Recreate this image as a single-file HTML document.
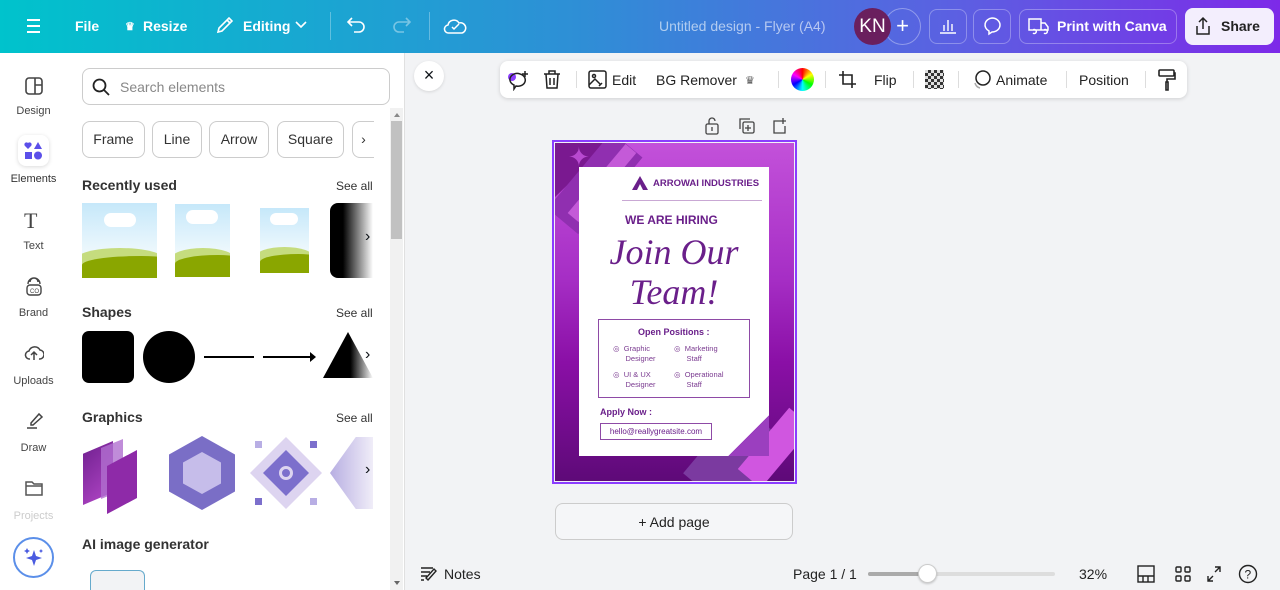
<!DOCTYPE html>
<html><head><meta charset="utf-8"><style>
*{box-sizing:border-box;margin:0;padding:0}
html,body{width:1280px;height:590px;overflow:hidden}
body{font-family:"Liberation Sans",sans-serif;background:#f2f3f5;position:relative;color:#0e1318}
.a{position:absolute}
.top{left:0;top:0;width:1280px;height:53px;background:linear-gradient(90deg,#00c3cc 0%,#2e8fd6 45%,#5c5fe2 75%,#7d2ae8 100%);color:#fff;font-weight:bold;font-size:14px}
.top .t{position:absolute;top:18px}
.btnb{position:absolute;top:9px;height:35px;border:1px solid rgba(255,255,255,.3);border-radius:8px}
.rail{left:0;top:53px;width:67px;height:537px;background:#fff}
.rail .l{position:absolute;width:67px;text-align:center;font-size:11px;color:#444}
.panel{left:67px;top:53px;width:338px;height:537px;background:#fff;border-right:1px solid #e0e0e0}
.chip{position:absolute;height:37px;border:1px solid #ccc;border-radius:8px;font-size:14px;color:#333;text-align:center;line-height:35px}
.h{position:absolute;font-size:14px;font-weight:bold;color:#333}
.sa{position:absolute;font-size:12px;color:#333}
.tb{left:500px;top:61px;width:687px;height:37px;background:#fff;border-radius:8px;box-shadow:0 1px 4px rgba(0,0,0,.15);font-size:14px;color:#222}
.tb span{position:absolute;top:11px}
.sep{position:absolute;top:10px;width:1px;height:17px;background:#ddd}
.land{position:absolute;overflow:hidden;background:linear-gradient(#c6e8fa,#f0f9fd 70%)}
.land .c{position:absolute;background:#fff;border-radius:10px}
.land .g1{position:absolute;left:-10%;width:120%;height:40%;bottom:0;background:#c5dc7e;border-radius:50% 50% 0 0/40% 40% 0 0}
.land .g2{position:absolute;left:0;width:130%;height:30%;bottom:0;background:#8aa600;border-radius:60% 40% 0 0/40% 30% 0 0}
</style></head><body>
<div class="a top">
 <div class="a" style="left:27px;top:19px;width:13px;height:2px;background:#fff;box-shadow:0 6px #fff,0 12px #fff"></div>
 <span class="t" style="left:75px">File</span>
 <span class="t" style="left:125px;font-size:11px;top:20px">♛</span><span class="t" style="left:143px">Resize</span>
 <svg class="a" style="left:215px;top:15px" width="20" height="20" viewBox="0 0 20 20" fill="none" stroke="#fff" stroke-width="1.6"><path d="M3 17l1-4L14 3l3 3L7 16z M12 5l3 3"/></svg>
 <span class="t" style="left:243px">Editing</span>
 <svg class="a" style="left:295px;top:21px" width="12" height="8" viewBox="0 0 12 8" fill="none" stroke="#fff" stroke-width="1.6"><path d="M1 1l5 5 5-5"/></svg>
 <div class="a" style="left:330px;top:12px;width:1px;height:28px;background:rgba(255,255,255,.3)"></div>
 <svg class="a" style="left:346px;top:16px" width="22" height="20" viewBox="0 0 22 20" fill="none" stroke="#fff" stroke-width="1.6"><path d="M6 2L2 6l4 4M2 6h11a5 5 0 010 10H8"/></svg>
 <svg class="a" style="left:390px;top:16px" width="22" height="20" viewBox="0 0 22 20" fill="none" stroke="rgba(255,255,255,.4)" stroke-width="1.6"><path d="M16 2l4 4-4 4M20 6H9a5 5 0 000 10h5"/></svg>
 <div class="a" style="left:429px;top:12px;width:1px;height:28px;background:rgba(255,255,255,.3)"></div>
 <svg class="a" style="left:443px;top:15px" width="24" height="22" viewBox="0 0 24 22" fill="none" stroke="#fff" stroke-width="1.5"><path d="M6 18a4 4 0 01-1-8 6 6 0 0111-2 5 5 0 013 10z M9 12l2 2 5-5"/></svg>
 <span class="t" style="left:659px;font-weight:normal;color:rgba(255,255,255,.6)">Untitled design - Flyer (A4)</span>
 <div class="a" style="left:884px;top:8px;width:37px;height:37px;border:1px solid rgba(255,255,255,.35);border-radius:50%;text-align:center;line-height:34px;font-size:22px;font-weight:normal">+</div>
 <div class="a" style="left:854px;top:8px;width:37px;height:37px;background:#6a1f5e;border-radius:50%;text-align:center;line-height:37px;font-size:19px;font-weight:normal">KN</div>
 <div class="btnb" style="left:929px;width:38px"></div>
 <svg class="a" style="left:938px;top:17px" width="20" height="18" viewBox="0 0 20 18" fill="none" stroke="#fff" stroke-width="1.4"><path d="M2 16h16M6 14V8M10 14V3M14 14V7"/></svg>
 <div class="btnb" style="left:973px;width:38px"></div>
 <svg class="a" style="left:982px;top:16px" width="20" height="20" viewBox="0 0 20 20" fill="none" stroke="#fff" stroke-width="1.5"><path d="M10 2a8 7 0 110 14l-3 2 0-3a8 7 0 013-13z"/></svg>
 <div class="btnb" style="left:1019px;width:158px"></div>
 <svg class="a" style="left:1028px;top:17px" width="22" height="18" viewBox="0 0 22 18" fill="none" stroke="#fff" stroke-width="1.5"><path d="M1 2h12v11H1z M13 6h4l3 4v3h-7 M5 16a2 2 0 100-3 M16 16a2 2 0 100-3"/></svg>
 <span class="t" style="left:1057px">Print with Canva</span>
 <div class="a" style="left:1185px;top:8px;width:89px;height:37px;background:#f3eefd;border-radius:8px"></div>
 <svg class="a" style="left:1193px;top:16px" width="20" height="20" viewBox="0 0 20 20" fill="none" stroke="#222" stroke-width="1.5"><path d="M10 13V2M6 6l4-4 4 4M4 10v8h12v-8"/></svg>
 <span class="t" style="left:1221px;color:#222">Share</span>
</div>

<div class="a rail">
 <svg class="a" style="left:24px;top:23px" width="20" height="20" viewBox="0 0 20 20" fill="none" stroke="#444" stroke-width="1.6"><rect x="2" y="2" width="16" height="16" rx="3"/><path d="M11 2v16M11 9h7"/></svg>
 <div class="l" style="top:52px">Design</div>
 <div class="a" style="left:18px;top:82px;width:31px;height:31px;background:#fff;border-radius:8px;box-shadow:0 1px 4px rgba(0,0,0,.15)"></div>
 <svg class="a" style="left:24px;top:89px" width="19" height="18" viewBox="0 0 19 18" fill="#5b4fe9"><path d="M4 7L1 4a2 2 0 013-3 2 2 0 013 3z"/><path d="M14 0l4 7h-8z"/><rect x="1" y="10" width="7" height="7"/><circle cx="14" cy="13.5" r="4"/></svg>
 <div class="l" style="top:120px;color:#333">Elements</div>
 <div class="a" style="left:24px;top:155px;font-size:22px;font-family:'Liberation Serif',serif;color:#444;width:20px">T</div>
 <div class="l" style="top:187px">Text</div>
 <svg class="a" style="left:24px;top:224px" width="20" height="20" viewBox="0 0 20 20" fill="none" stroke="#444" stroke-width="1.4"><rect x="3" y="8" width="14" height="10" rx="3"/><path d="M4 7a6 6 0 0112 0M6 5a4 4 0 018 0"/><text x="6" y="16" font-size="6" fill="#444" stroke="none">CO</text></svg>
 <div class="l" style="top:254px">Brand</div>
 <svg class="a" style="left:24px;top:291px" width="20" height="18" viewBox="0 0 20 18" fill="none" stroke="#444" stroke-width="1.5"><path d="M6 15a4 4 0 01-1-8 6 6 0 0111-1 4 4 0 01-1 9 M10 16V9M7 11l3-3 3 3"/></svg>
 <div class="l" style="top:322px">Uploads</div>
 <svg class="a" style="left:24px;top:358px" width="20" height="20" viewBox="0 0 20 20" fill="none" stroke="#444" stroke-width="1.5"><path d="M7 12l8-9 3 3-9 8H7zM3 17h10"/></svg>
 <div class="l" style="top:389px">Draw</div>
 <svg class="a" style="left:24px;top:426px" width="20" height="18" viewBox="0 0 20 18" fill="none" stroke="#555" stroke-width="1.5"><path d="M2 3h6l2 2h8v11H2z M2 7h16"/></svg>
 <div class="l" style="top:457px;color:#ccc">Projects</div>
 <div class="a" style="left:13px;top:484px;width:41px;height:41px;border-radius:50%;border:2px solid #5b8fe9;background:#fff"></div>
 <svg class="a" style="left:23px;top:494px" width="22" height="22" viewBox="0 0 22 22" fill="#4a5be0"><path d="M11 3l2 6 6 2-6 2-2 6-2-6-6-2 6-2z"/><path d="M4 1l1 2 2 1-2 1-1 2-1-2-2-1 2-1zM18 2l.7 1.3L20 4l-1.3.7L18 6l-.7-1.3L16 4l1.3-.7z"/></svg>
</div>

<div class="a panel">
 <div class="a" style="left:15px;top:15px;width:308px;height:37px;border:1px solid #ccc;border-radius:8px"></div>
 <svg class="a" style="left:25px;top:25px" width="18" height="18" viewBox="0 0 18 18" fill="none" stroke="#222" stroke-width="1.8"><circle cx="7.5" cy="7.5" r="6"/><path d="M12 12l5 5"/></svg>
 <div class="a" style="left:53px;top:26px;font-size:14px;color:#888">Search elements</div>
 <div class="chip" style="left:15px;width:63px;top:68px">Frame</div>
 <div class="chip" style="left:85px;width:50px;top:68px">Line</div>
 <div class="chip" style="left:142px;width:60px;top:68px">Arrow</div>
 <div class="chip" style="left:210px;width:67px;top:68px">Square</div>
 <div class="chip" style="left:285px;width:22px;top:68px;border-right:none;border-radius:8px 0 0 8px">›</div>
 <div class="h" style="left:15px;top:124px">Recently used</div><div class="sa" style="left:269px;top:126px">See all</div>
 <div class="land" style="left:15px;top:150px;width:75px;height:75px"><div class="c" style="left:22px;top:10px;width:32px;height:14px"></div><div class="g1"></div><div class="g2"></div></div>
 <div class="land" style="left:108px;top:151px;width:55px;height:73px"><div class="c" style="left:11px;top:6px;width:32px;height:14px"></div><div class="g1"></div><div class="g2"></div></div>
 <div class="land" style="left:193px;top:155px;width:49px;height:65px"><div class="c" style="left:10px;top:5px;width:28px;height:12px"></div><div class="g1"></div><div class="g2"></div></div>
 <div class="a" style="left:263px;top:150px;width:43px;height:75px;border-radius:8px 0 0 8px;background:linear-gradient(90deg,#000 30%,#fff)"></div>
 <div class="a" style="left:298px;top:175px;font-size:16px">›</div>
 <div class="h" style="left:15px;top:251px">Shapes</div><div class="sa" style="left:269px;top:253px">See all</div>
 <div class="a" style="left:15px;top:278px;width:52px;height:52px;background:#000;border-radius:7px"></div>
 <div class="a" style="left:76px;top:278px;width:52px;height:52px;background:#000;border-radius:50%"></div>
 <div class="a" style="left:137px;top:303px;width:50px;height:2px;background:#000"></div>
 <div class="a" style="left:196px;top:303px;width:50px;height:2px;background:#000"></div>
 <div class="a" style="left:243px;top:299px;border-left:6px solid #000;border-top:5px solid transparent;border-bottom:5px solid transparent"></div>
 <div class="a" style="left:256px;top:279px;width:50px;height:46px;background:linear-gradient(90deg,#000 55%,#fff);clip-path:polygon(50% 0,100% 100%,0 100%)"></div>
 <div class="a" style="left:298px;top:293px;font-size:16px">›</div>
 <div class="h" style="left:15px;top:356px">Graphics</div><div class="sa" style="left:269px;top:358px">See all</div>
 <div class="a" style="left:16px;top:388px;width:30px;height:64px;background:linear-gradient(135deg,#6e1f8e,#b548c9);clip-path:polygon(0 20%,100% 0,100% 80%,0 100%)"></div>
 <div class="a" style="left:34px;top:386px;width:22px;height:60px;background:#b06fd0;opacity:.8;clip-path:polygon(0 15%,100% 0,100% 85%,0 100%)"></div>
 <div class="a" style="left:40px;top:397px;width:30px;height:64px;background:#8e2aa8;clip-path:polygon(0 25%,100% 0,100% 75%,0 100%)"></div>
 <div class="a" style="left:102px;top:383px;width:66px;height:74px;background:#7a6ec6;clip-path:polygon(50% 0,100% 25%,100% 75%,50% 100%,0 75%,0 25%)"></div>
 <div class="a" style="left:116px;top:399px;width:38px;height:42px;background:#c6bdea;clip-path:polygon(50% 0,100% 25%,100% 75%,50% 100%,0 75%,0 25%)"></div>
 <div class="a" style="left:183px;top:384px;width:72px;height:72px;background:#ddd4f0;clip-path:polygon(50% 0,100% 50%,50% 100%,0 50%)"></div>
 <div class="a" style="left:196px;top:397px;width:46px;height:46px;background:#7c6fcc;clip-path:polygon(50% 0,100% 50%,50% 100%,0 50%)"></div>
 <div class="a" style="left:212px;top:413px;width:14px;height:14px;border-radius:50%;border:3px solid #ddd4f0"></div>
 <div class="a" style="left:188px;top:388px;width:7px;height:7px;background:#b8aee4"></div>
 <div class="a" style="left:243px;top:388px;width:7px;height:7px;background:#7c6fcc"></div>
 <div class="a" style="left:188px;top:445px;width:7px;height:7px;background:#7c6fcc"></div>
 <div class="a" style="left:243px;top:445px;width:7px;height:7px;background:#b8aee4"></div>
 <div class="a" style="left:263px;top:384px;width:43px;height:72px;background:linear-gradient(90deg,#b7aee2,#f0edf8);clip-path:polygon(60% 0,100% 0,100% 100%,60% 100%,0 50%)"></div>
 <div class="a" style="left:298px;top:408px;font-size:16px">›</div>
 <div class="h" style="left:15px;top:483px">AI image generator</div>
 <div class="a" style="left:23px;top:517px;width:55px;height:30px;border:1px solid #6ac;border-bottom:none;border-radius:6px 6px 0 0;background:#f2f3f5"></div>
 <div class="a" style="left:323px;top:55px;width:13px;height:482px;background:#f1f1f1"></div>
 <div class="a" style="left:324px;top:68px;width:11px;height:118px;background:#c1c1c1"></div>
 <div class="a" style="left:327px;top:60px;border-bottom:4px solid #888;border-left:3px solid transparent;border-right:3px solid transparent"></div>
 <div class="a" style="left:327px;top:528px;border-top:4px solid #666;border-left:3px solid transparent;border-right:3px solid transparent"></div>
</div>

<div class="a" style="left:414px;top:61px;width:30px;height:30px;border-radius:50%;background:#fff;box-shadow:0 1px 3px rgba(0,0,0,.12);text-align:center;line-height:29px;font-size:18px">×</div>
<div class="a tb">
 <div class="a" style="left:8px;top:12px;width:8px;height:8px;border-radius:50%;background:#8b3dff"></div>
 <svg class="a" style="left:8px;top:8px" width="22" height="22" viewBox="0 0 22 22" fill="none" stroke="#222" stroke-width="1.5"><path d="M12 5a7 6 0 11-4 12l-2 3v-4a7 6 0 016-11M17 2v6M14 5h6"/></svg>
 <svg class="a" style="left:43px;top:9px" width="18" height="19" viewBox="0 0 18 19" fill="none" stroke="#222" stroke-width="1.5"><path d="M1 4h16M6 4V1h6v3M3 4l1 14h10l1-14M7 8v7M11 8v7"/></svg>
 <div class="sep" style="left:76px"></div>
 <svg class="a" style="left:88px;top:9px" width="19" height="19" viewBox="0 0 19 19" fill="none" stroke="#222" stroke-width="1.5"><rect x="1" y="1" width="17" height="17" rx="2"/><circle cx="6" cy="6" r="1.5"/><path d="M1 15l6-6 5 5M11 16l3-3"/></svg>
 <span style="left:112px">Edit</span>
 <span style="left:156px">BG Remover</span><span style="left:245px;font-size:11px;top:13px;color:#555">♛</span>
 <div class="sep" style="left:278px"></div>
 <div class="a" style="left:291px;top:7px;width:23px;height:23px;border-radius:50%;background:conic-gradient(red,yellow,lime,cyan,blue,magenta,red)"></div>
 <div class="sep" style="left:325px"></div>
 <svg class="a" style="left:338px;top:9px" width="19" height="19" viewBox="0 0 19 19" fill="none" stroke="#222" stroke-width="1.6"><path d="M5 1v13h13M1 5h13v13"/></svg>
 <span style="left:374px">Flip</span>
 <div class="sep" style="left:413px"></div>
 <div class="a" style="left:425px;top:9px;width:19px;height:19px;background:repeating-conic-gradient(#333 0 25%,#ddd 0 50%) 0 0/6px 6px"></div>
 <div class="sep" style="left:458px"></div>
 <svg class="a" style="left:470px;top:8px" width="22" height="21" viewBox="0 0 22 21" fill="none" stroke="#222" stroke-width="1.5"><circle cx="13" cy="9" r="7"/><path d="M5 14a7 7 0 005 5" stroke="#aaa"/></svg>
 <span style="left:496px">Animate</span>
 <div class="sep" style="left:566px"></div>
 <span style="left:579px">Position</span>
 <div class="sep" style="left:645px"></div>
 <svg class="a" style="left:658px;top:8px" width="18" height="22" viewBox="0 0 18 22" fill="none" stroke="#222" stroke-width="1.6"><rect x="1" y="1" width="15" height="6" rx="1"/><path d="M16 4h1v6H9v3M8 13h2v8H8z"/></svg>
</div>
<svg class="a" style="left:705px;top:117px" width="85" height="18" viewBox="0 0 85 18" fill="none" stroke="#444" stroke-width="1.3"><rect x="1" y="7" width="12" height="10" rx="1.5"/><path d="M4 7V4a3 3 0 016 0M7 14v-4"/><rect x="38" y="5" width="11" height="11" rx="1.5"/><path d="M35 12V2h10M43 8v6M40 11h6"/><path d="M80 9v7H69V4h6M78 1v6M75 4h6"/></svg>

<!-- Flyer -->
<div class="a" style="left:552px;top:140px;width:245px;height:344px;border:2px solid #8b3dff"></div>
<div class="a" style="left:555px;top:143px;width:239px;height:338px;background:linear-gradient(180deg,#c351da 0%,#a62ec5 40%,#8a0fa6 65%,#5e0a78 100%);overflow:hidden">
 <div class="a" style="left:0;top:0;width:80px;height:60px;background:#7a1990;clip-path:polygon(0 0,70% 0,0 90%)"></div>
 <div class="a" style="left:20px;top:-10px;width:40px;height:100px;background:#902fb0;transform:rotate(40deg)"></div>
 <div class="a" style="left:40px;top:-5px;width:14px;height:90px;background:#c45ad8;transform:rotate(40deg)"></div>
 <div class="a" style="left:150px;top:270px;width:60px;height:90px;background:#7b3aa0;transform:rotate(40deg)"></div>
 <div class="a" style="left:205px;top:265px;width:30px;height:80px;background:#d056e0;transform:rotate(40deg)"></div>
</div>
<div class="a" style="left:568px;top:142px;font-size:26px;color:#b84ad0">✦</div>
<div class="a" style="left:584px;top:179px;font-size:30px;color:#a0109c">✦</div>
<div class="a" style="left:579px;top:167px;width:190px;height:289px;background:#fff"></div>
<svg class="a" style="left:632px;top:176px" width="16" height="14" viewBox="0 0 16 14" fill="#6a1f8a"><path d="M8 0l8 14H11L8 8 5 14H0z"/></svg>
<div class="a" style="left:653px;top:178px;font-size:9.5px;font-weight:bold;color:#6a1f8a">ARROWAI INDUSTRIES</div>
<div class="a" style="left:622px;top:200px;width:140px;height:1px;background:#c9a8d4"></div>
<div class="a" style="left:625px;top:213px;font-size:12px;font-weight:bold;color:#6a1f8a">WE ARE HIRING</div>
<div class="a" style="left:579px;top:232px;width:190px;text-align:center;font-family:'Liberation Serif',serif;font-style:italic;font-size:36px;line-height:40px;color:#6a1f8a">Join Our<br>Team!</div>
<div class="a" style="left:598px;top:319px;width:152px;height:79px;border:1px solid #8e4aa6"></div>
<div class="a" style="left:638px;top:327px;font-size:9px;font-weight:bold;color:#6a1f8a">Open Positions :</div>
<div class="a" style="left:613px;top:344px;font-size:7.5px;line-height:10px;color:#7a3a90">◎&nbsp; Graphic<br>&nbsp;&nbsp;&nbsp;&nbsp;&nbsp; Designer</div>
<div class="a" style="left:674px;top:344px;font-size:7.5px;line-height:10px;color:#7a3a90">◎&nbsp; Marketing<br>&nbsp;&nbsp;&nbsp;&nbsp;&nbsp; Staff</div>
<div class="a" style="left:613px;top:370px;font-size:7.5px;line-height:10px;color:#7a3a90">◎&nbsp; UI &amp; UX<br>&nbsp;&nbsp;&nbsp;&nbsp;&nbsp; Designer</div>
<div class="a" style="left:674px;top:370px;font-size:7.5px;line-height:10px;color:#7a3a90">◎&nbsp; Operational<br>&nbsp;&nbsp;&nbsp;&nbsp;&nbsp; Staff</div>
<div class="a" style="left:600px;top:407px;font-size:9px;font-weight:bold;color:#6a1f8a">Apply Now :</div>
<div class="a" style="left:600px;top:423px;width:112px;height:17px;border:1px solid #8e4aa6;font-size:8px;text-align:center;line-height:15px;color:#6a1f8a">hello@reallygreatsite.com</div>
<div class="a" style="left:720px;top:415px;width:49px;height:41px;background:linear-gradient(135deg,transparent 55%,#9b3fbf 55%)"></div>

<div class="a" style="left:555px;top:503px;width:238px;height:37px;border:1px solid #ccc;border-radius:8px;background:#f5f6f8;text-align:center;line-height:36px;font-size:14px;color:#222">+ Add page</div>

<svg class="a" style="left:420px;top:566px" width="18" height="16" viewBox="0 0 18 16" fill="none" stroke="#222" stroke-width="1.4"><path d="M1 2h12M1 6h9M1 10h6M1 14h3M8 14l8-9-2-2-8 9z"/></svg>
<div class="a" style="left:444px;top:566px;font-size:14px;color:#222">Notes</div>
<div class="a" style="left:793px;top:566px;font-size:14px;color:#222">Page 1 / 1</div>
<div class="a" style="left:868px;top:572px;width:187px;height:4px;border-radius:2px;background:#ddd"></div>
<div class="a" style="left:868px;top:572px;width:60px;height:4px;border-radius:2px;background:#aaa"></div>
<div class="a" style="left:918px;top:564px;width:19px;height:19px;border-radius:50%;background:#fff;border:1px solid #ccc;box-shadow:0 1px 2px rgba(0,0,0,.2)"></div>
<div class="a" style="left:1079px;top:566px;font-size:14px;color:#222">32%</div>
<svg class="a" style="left:1136px;top:564px" width="140" height="20" viewBox="0 0 140 20" fill="none" stroke="#222" stroke-width="1.4"><rect x="2" y="2" width="16" height="16"/><path d="M2 12h16M7 12v6M12 12v6"/><rect x="40" y="3" width="5" height="5" rx="1"/><rect x="49" y="3" width="5" height="5" rx="1"/><rect x="40" y="12" width="5" height="5" rx="1"/><rect x="49" y="12" width="5" height="5" rx="1"/><path d="M79 3h5v5M84 3l-5 5M77 17h-5v-5M72 17l5-5"/><circle cx="112" cy="10" r="8.5"/><text x="108.5" y="14.5" font-size="12" fill="#222" stroke="none" font-family="Liberation Sans">?</text></svg>
</body></html>
